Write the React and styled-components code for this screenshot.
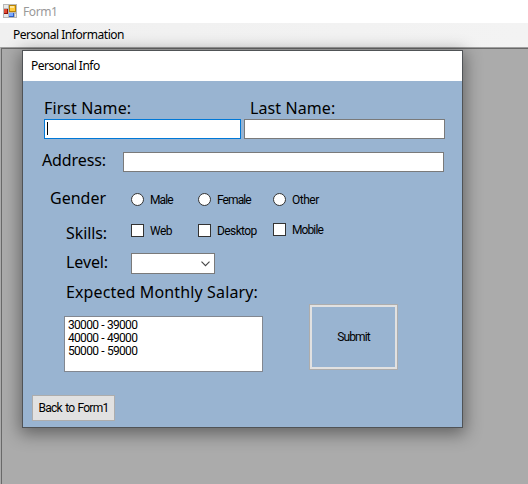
import React from "react";
import styled, { createGlobalStyle } from "styled-components";

const Global = createGlobalStyle`
  * { box-sizing: border-box; }
  body { margin: 0; overflow: hidden; background: #ababab; }
`;

const Window = styled.div`
  width: 528px;
  height: 484px;
  display: flex;
  flex-direction: column;
  overflow: hidden;
  color: #000;
  font: 12px/16px "Noto Sans", "Open Sans", sans-serif;
`;

const TitleBar = styled.header`
  height: 23px;
  flex: none;
  display: flex;
  padding: 4px 0 0 3px;
  gap: 6px;
  background: #fff;
  color: #999;
`;

const MenuBar = styled.nav`
  height: 24px;
  flex: none;
  padding: 4px 0 0 13px;
  background: linear-gradient(90deg, #f0f0f0, #f3f3f3);
`;

const Caption = styled.span`
  display: block;
  white-space: nowrap;
  letter-spacing: ${(p) => p.$track || 0}px;
`;

const Workspace = styled.main`
  flex: 1;
  padding: 1px 0 0 20px;
  background: #ababab;
  border: solid #696969;
  border-width: 1px 0 0 1px;
  box-shadow: 0 -1px #a0a0a0;
  margin: 1px 0 0 1px;
`;

const Dialog = styled.section`
  width: 441px;
  height: 378px;
  display: flex;
  flex-direction: column;
  border: 1px solid #505356;
  background: #99b4d1;
  box-shadow: 0 4px 16px 2px rgba(0, 0, 0, 0.42);
`;

const DialogTitle = styled.div`
  height: 30px;
  flex: none;
  padding: 7px 0 0 8px;
  background: #fff;
`;

const Row = styled.div`
  flex: none;
  display: flex;
  align-items: flex-start;
  height: ${(p) => p.$h}px;
  padding-left: ${(p) => p.$left}px;
  margin-top: ${(p) => p.$gap || 0}px;
`;

const Label = styled.label`
  flex: none;
  width: ${(p) => p.$w}px;
  font-size: 16px;
  line-height: 20px;
  white-space: nowrap;
  letter-spacing: ${(p) => p.$track || 0}px;
`;

const TextBox = styled.div`
  flex: none;
  width: ${(p) => p.$w}px;
  height: 20px;
  margin: ${(p) => p.$top || 0}px 3px 0 0;
  padding: 2px;
  background: #fff;
  border: 1px solid ${(p) => (p.$focused ? "#0078d7" : "#7a7a7a")};
`;

const Caret = styled.i`
  display: block;
  width: 1px;
  height: 13px;
  background: #000;
`;

const Option = styled.label`
  flex: none;
  display: flex;
  gap: 6px;
  width: ${(p) => p.$w}px;
  margin-top: ${(p) => p.$top}px;
  font: 12px/13px Roboto, "Liberation Sans", sans-serif;
  letter-spacing: ${(p) => p.$track}px;
  white-space: nowrap;
`;

const Mark = styled.i`
  flex: none;
  width: 13px;
  height: 13px;
  background: #fff;
  border: 1px solid #333;
  border-radius: ${(p) => (p.$round ? "50%" : "0")};
`;

const OptionText = styled.span`
  padding-top: 1px;
`;

const Combo = styled.div`
  width: 84px;
  height: 21px;
  margin-top: 1px;
  display: flex;
  align-items: center;
  justify-content: flex-end;
  padding-right: 4px;
  background: #fff;
  border: 1px solid #7a7a7a;
`;

const ListBox = styled.ul`
  flex: none;
  width: 199px;
  height: 56px;
  margin: 12px 46px 0 0;
  padding: 2px 3px;
  list-style: none;
  background: #fff;
  border: 1px solid #828790;
  font: 12px/13px Roboto, "Liberation Sans", sans-serif;
  letter-spacing: -0.7px;
  word-spacing: 0.8px;
`;

const Button = styled.button`
  flex: none;
  width: ${(p) => p.$w}px;
  height: ${(p) => p.$h}px;
  padding: 0;
  color: #000;
  border: 1px solid #adadad;
  border-radius: 0;
  background: ${(p) => (p.$outlined ? "#99b4d1" : "#e1e1e1")};
  box-shadow: inset 0 0 0 ${(p) => (p.$outlined ? 2 : 0)}px #e1e1e1;
  font: 12px/14px Roboto, "Liberation Sans", sans-serif;
  letter-spacing: ${(p) => p.$track}px;
  word-spacing: 1px;
`;

const AppIcon = () => (
  <svg width="14" height="14" viewBox="0 0 14 14" shapeRendering="crispEdges">
    <path fill="#b8b8b8" d="M0 0h14v14H0z" />
    <path fill="#e8e8e8" d="M1 1h4v3H1zM1 10h4v3H1zM12 10h1v3h-1z" />
    <path fill="#8c1008" d="M1 5h4v5H1z" />
    <path fill="#e34a32" d="M1 5h3v4H1z" />
    <path fill="#b88305" d="M6 1h7v7H6z" />
    <path fill="#ffc93a" d="M7 2h5v5H7z" />
    <path fill="#ffe79b" d="M7 2h4v2H7z" />
    <path fill="#2c5cc5" d="M6 9h5v4H6z" />
    <path fill="#7caaff" d="M6 9h4v3H6z" />
  </svg>
);

const Chevron = () => (
  <svg width="9" height="6" viewBox="0 0 9 6" fill="none" stroke="#444" strokeWidth="1.1">
    <path d="M.5 .7 4.5 4.7 8.5 .7" />
  </svg>
);

const Choice = ({ children, w, top, round, track = -0.5 }) => (
  <Option $w={w} $top={top} $track={track}>
    <Mark $round={round} />
    <OptionText>{children}</OptionText>
  </Option>
);

const ranges = ["30000 - 39000", "40000 - 49000", "50000 - 59000"];

export default function App() {
  return (
    <Window>
      <Global />
      <TitleBar>
        <AppIcon />
        <Caption $track={-0.4}>Form1</Caption>
      </TitleBar>
      <MenuBar>
        <Caption $track={-0.46}>Personal Information</Caption>
      </MenuBar>
      <Workspace>
        <Dialog>
          <DialogTitle>
            <Caption $track={-0.5}>Personal Info</Caption>
          </DialogTitle>
          <Row $h={21} $left={21} $gap={17}>
            <Label $w={206} $track={0.1}>First Name:</Label>
            <Label $w={100} $track={0.1}>Last Name:</Label>
          </Row>
          <Row $h={31} $left={21}>
            <TextBox $w={197} $focused><Caret /></TextBox>
            <TextBox $w={201} />
          </Row>
          <Row $h={38} $left={19}>
            <Label $w={81} $track={-0.1}>Address:</Label>
            <TextBox $w={321} $top={2} />
          </Row>
          <Row $h={35} $left={27}>
            <Label $w={81}>Gender</Label>
            <Choice w={67} top={5} round track={-0.9}>Male</Choice>
            <Choice w={75} top={5} round track={-0.9}>Female</Choice>
            <Choice w={75} top={5} round>Other</Choice>
          </Row>
          <Row $h={29} $left={43}>
            <Label $w={65} $track={-0.1}>Skills:</Label>
            <Choice w={67} top={1}>Web</Choice>
            <Choice w={75} top={1} track={-0.6}>Desktop</Choice>
            <Choice w={75} top={0} track={-0.9}>Mobile</Choice>
          </Row>
          <Row $h={30} $left={43}>
            <Label $w={65} $track={-0.1}>Level:</Label>
            <Combo><Chevron /></Combo>
          </Row>
          <Row $h={22} $left={43}>
            <Label $w={200} $track={0.13}>Expected Monthly Salary:</Label>
          </Row>
          <Row $h={91} $left={41}>
            <ListBox>
              {ranges.map((r) => <li key={r}>{r}</li>)}
            </ListBox>
            <Button $w={89} $h={66} $track={-0.9} $outlined>Submit</Button>
          </Row>
          <Row $h={26} $left={9}>
            <Button $w={83} $h={26} $track={-0.75}>Back to Form1</Button>
          </Row>
        </Dialog>
      </Workspace>
    </Window>
  );
}
